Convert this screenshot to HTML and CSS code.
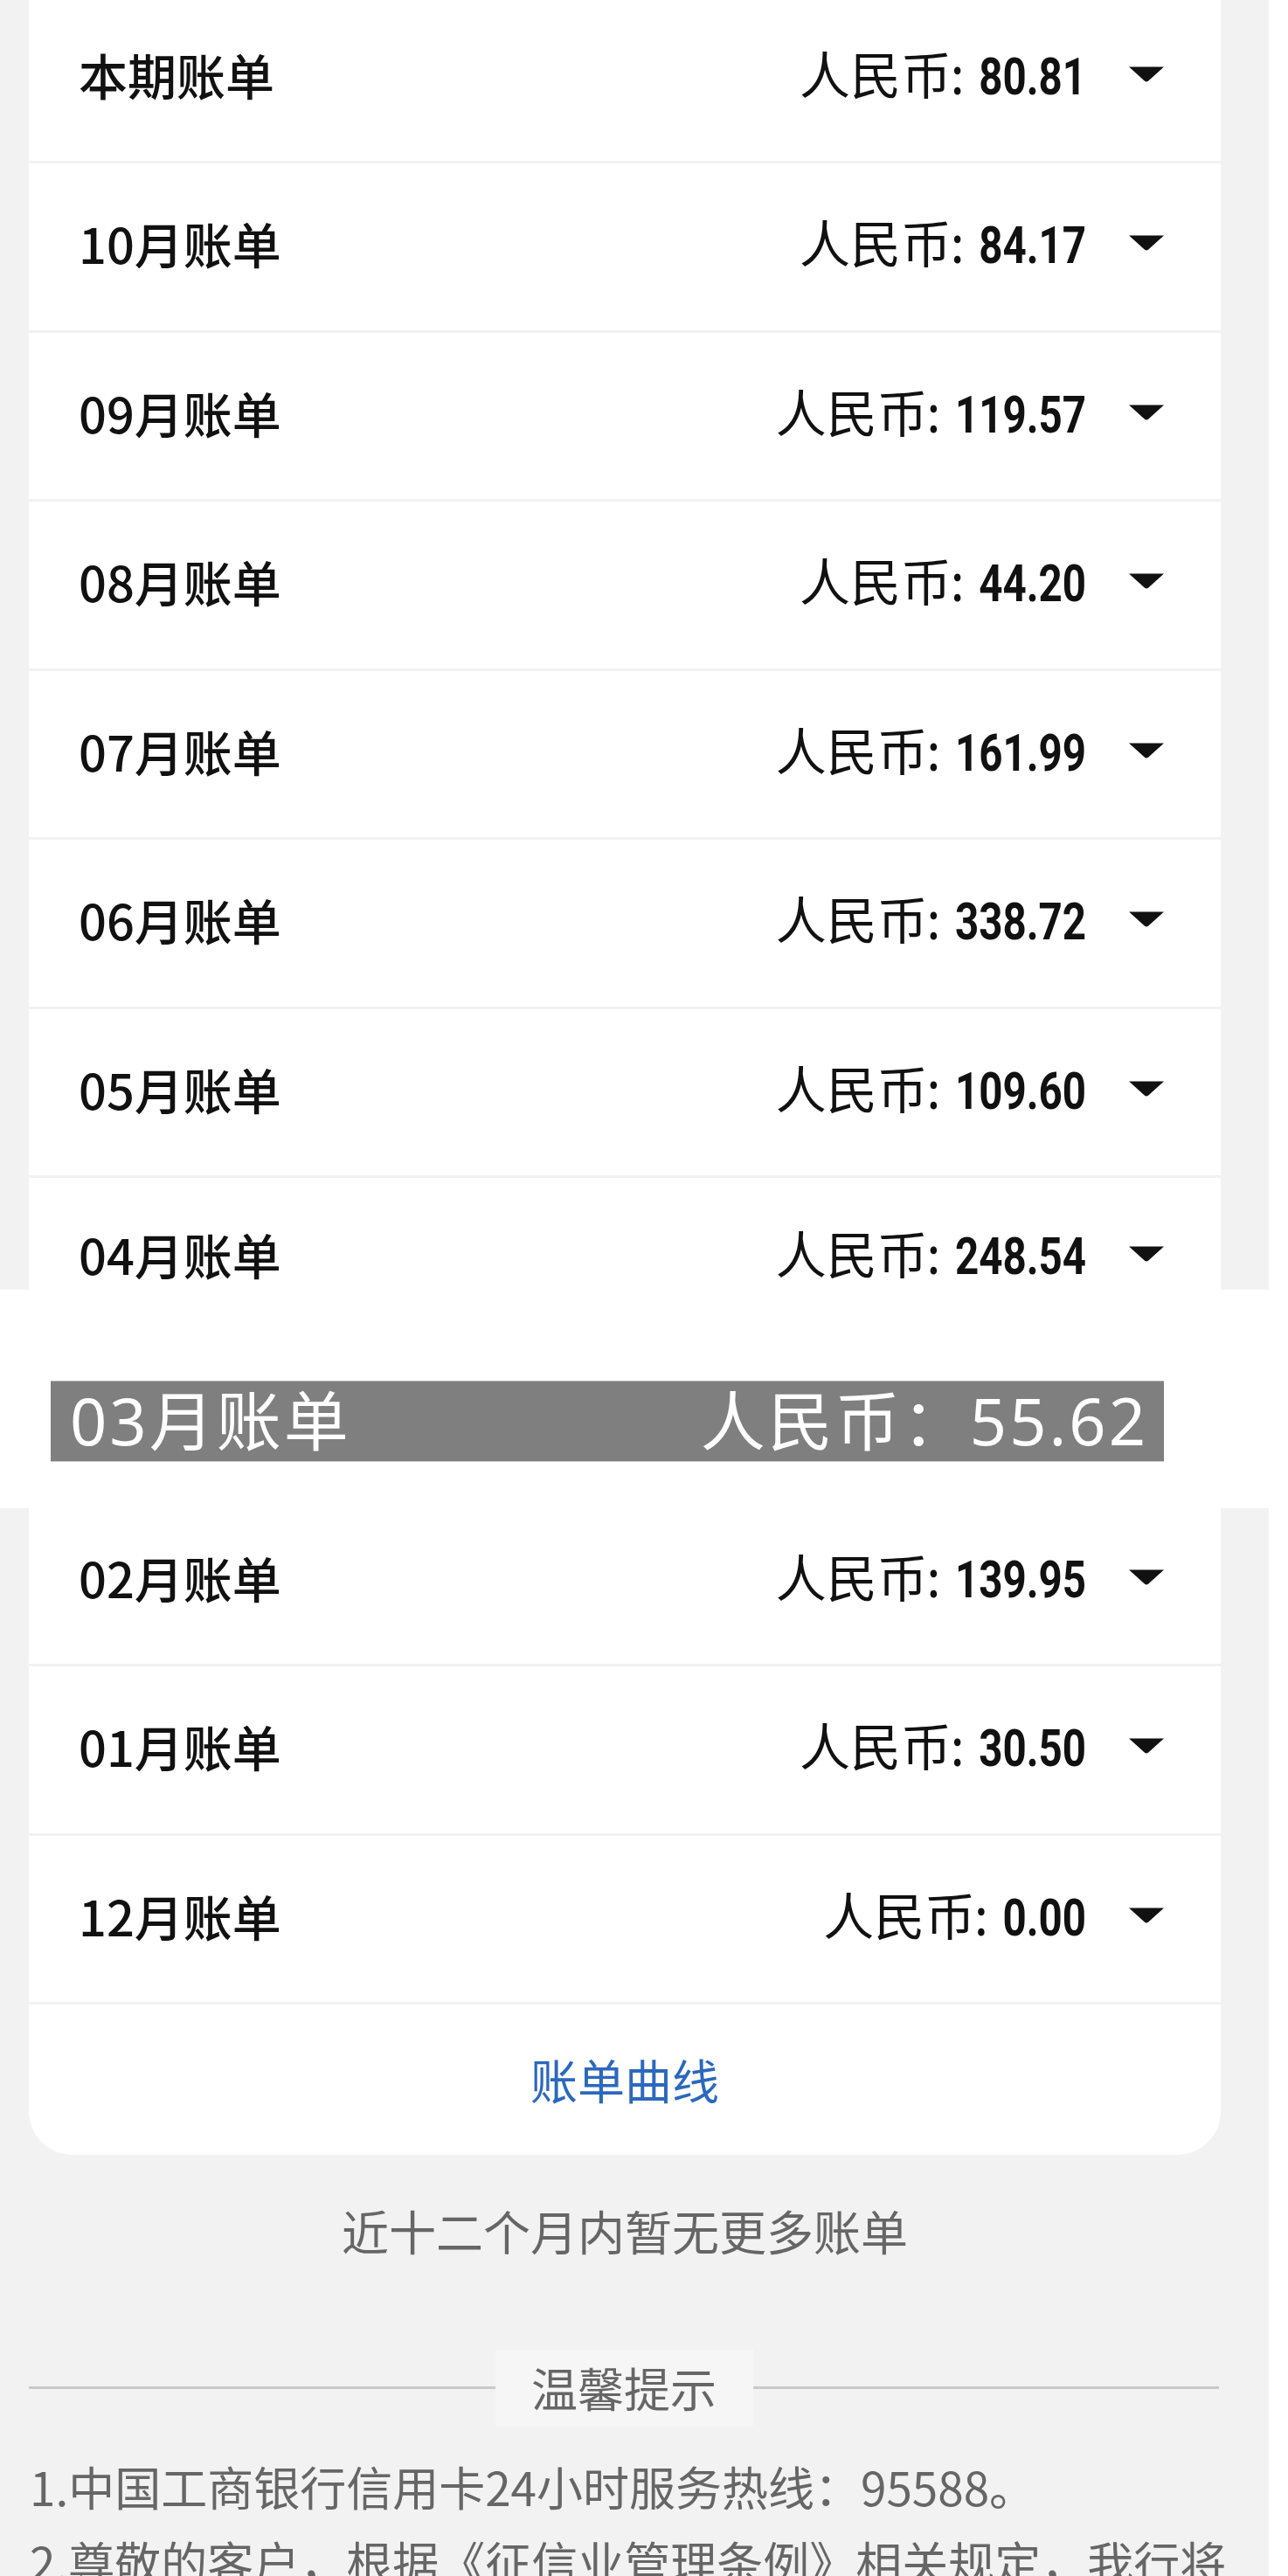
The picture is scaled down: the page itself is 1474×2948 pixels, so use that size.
FILE: index.html
```html
<!DOCTYPE html>
<html lang="zh-CN">
<head>
<meta charset="utf-8">
<title>账单列表</title>
<link rel="stylesheet" href="styles.css">
</head>
<body>
<div class="page">
  <div class="card card-top">
    <div class="row"><span class="label">本期账单</span><span class="amt"><span class="cur">人民币</span><span class="num">: 80.81</span></span><svg class="arrow" viewBox="0 0 42 18"><path d="M1 0.5 H41 L23 16.8 Q21 18.4 19 16.8 Z"/></svg></div>
    <div class="row"><span class="label">10月账单</span><span class="amt"><span class="cur">人民币</span><span class="num">: 84.17</span></span><svg class="arrow" viewBox="0 0 42 18"><path d="M1 0.5 H41 L23 16.8 Q21 18.4 19 16.8 Z"/></svg></div>
    <div class="row"><span class="label">09月账单</span><span class="amt"><span class="cur">人民币</span><span class="num">: 119.57</span></span><svg class="arrow" viewBox="0 0 42 18"><path d="M1 0.5 H41 L23 16.8 Q21 18.4 19 16.8 Z"/></svg></div>
    <div class="row"><span class="label">08月账单</span><span class="amt"><span class="cur">人民币</span><span class="num">: 44.20</span></span><svg class="arrow" viewBox="0 0 42 18"><path d="M1 0.5 H41 L23 16.8 Q21 18.4 19 16.8 Z"/></svg></div>
    <div class="row"><span class="label">07月账单</span><span class="amt"><span class="cur">人民币</span><span class="num">: 161.99</span></span><svg class="arrow" viewBox="0 0 42 18"><path d="M1 0.5 H41 L23 16.8 Q21 18.4 19 16.8 Z"/></svg></div>
    <div class="row"><span class="label">06月账单</span><span class="amt"><span class="cur">人民币</span><span class="num">: 338.72</span></span><svg class="arrow" viewBox="0 0 42 18"><path d="M1 0.5 H41 L23 16.8 Q21 18.4 19 16.8 Z"/></svg></div>
    <div class="row"><span class="label">05月账单</span><span class="amt"><span class="cur">人民币</span><span class="num">: 109.60</span></span><svg class="arrow" viewBox="0 0 42 18"><path d="M1 0.5 H41 L23 16.8 Q21 18.4 19 16.8 Z"/></svg></div>
    <div class="clip clip-top">
      <div class="row row-up"><span class="label">04月账单</span><span class="amt"><span class="cur">人民币</span><span class="num">: 248.54</span></span><svg class="arrow" viewBox="0 0 42 18"><path d="M1 0.5 H41 L23 16.8 Q21 18.4 19 16.8 Z"/></svg></div>
    </div>
  </div>

  <div class="band">
    <div class="mask"><span>03月账单</span><span>人民币：55.62</span></div>
  </div>

  <div class="card card-bottom">
    <div class="clip clip-bottom">
      <div class="row"><span class="label">02月账单</span><span class="amt"><span class="cur">人民币</span><span class="num">: 139.95</span></span><svg class="arrow" viewBox="0 0 42 18"><path d="M1 0.5 H41 L23 16.8 Q21 18.4 19 16.8 Z"/></svg></div>
    </div>
    <div class="row"><span class="label">01月账单</span><span class="amt"><span class="cur">人民币</span><span class="num">: 30.50</span></span><svg class="arrow" viewBox="0 0 42 18"><path d="M1 0.5 H41 L23 16.8 Q21 18.4 19 16.8 Z"/></svg></div>
    <div class="row"><span class="label">12月账单</span><span class="amt"><span class="cur">人民币</span><span class="num">: 0.00</span></span><svg class="arrow" viewBox="0 0 42 18"><path d="M1 0.5 H41 L23 16.8 Q21 18.4 19 16.8 Z"/></svg></div>
    <div class="curve">账单曲线</div>
  </div>

  <div class="nomore">近十二个月内暂无更多账单</div>

  <div class="tips-head"><span class="line"></span><span class="tips-title">温馨提示</span><span class="line"></span></div>
  <div class="tips">
    <p>1.中国工商银行信用卡24小时服务热线：95588。</p>
    <p>2.尊敬的客户，根据《征信业管理条例》相关规定，我行将按照规定向金融信用信息基础数据库报送您的信用信息。</p>
  </div>
</div>
</body>
</html>
```

FILE: styles.css
```css
html, body {
  margin: 0;
  padding: 0;
  background: #ffffff;
}
body {
  font-family: "Noto Sans CJK SC", "Noto Sans", sans-serif;
  overflow: hidden;
}
.page {
  width: 1452px;
  background: #f2f2f2;
  padding-bottom: 40px;
}
.card {
  margin: 0 55px 0 33px;
  background: #ffffff;
}
.card-top {
  margin-top: -6.5px;
}
.card-bottom {
  border-radius: 0 0 50px 50px;
}
.row {
  height: 190.5px;
  border-bottom: 3px solid #f2f2f2;
  display: flex;
  align-items: center;
  padding: 0 64px 8px 57px;
  box-sizing: content-box;
  color: #111111;
  flex-shrink: 0;
  line-height: 1;
}
.row > .label,
.row > .amt,
.row > .arrow {
  margin-top: 0;
}
.row {
  height: 182.5px;
}
.row-up {
  padding-bottom: 16px;
  height: 174.5px;
}
.label {
  font-size: 56px;
  font-weight: 500;
  flex: 1;
}
.amt {
  display: flex;
  align-items: baseline;
}
.cur {
  font-size: 58px;
  font-weight: 400;
}
.num {
  display: inline-block;
  font-family: Roboto, "Liberation Sans", sans-serif;
  font-size: 47.5px;
  font-weight: 700;
  white-space: pre;
  word-spacing: 6px;
  transform: scaleY(1.24);
  transform-origin: 50% 84%;
}
.arrow {
  width: 42px;
  height: 18px;
  margin-left: 48px;
  fill: #111111;
}
.clip {
  overflow: hidden;
  display: flex;
  flex-direction: column;
}
.clip-top {
  height: 127.5px;
  justify-content: flex-start;
}
.clip-bottom {
  height: 181.5px;
  justify-content: flex-end;
}
.band {
  background: #ffffff;
  width: 1474px;
  height: 250px;
  padding: 104px 0 0 58px;
  box-sizing: border-box;
}
.mask {
  width: 1274px;
  height: 93px;
  box-sizing: border-box;
  background: #7f7f7f;
  border-top: 1px solid #b8b8b8;
  border-bottom: 1px solid #c8c8c8;
  color: #ffffff;
  font-family: "Noto Sans", "Noto Sans CJK SC", sans-serif;
  font-size: 74px;
  letter-spacing: 3px;
  display: flex;
  justify-content: space-between;
  align-items: center;
  padding: 0 18px 0 22px;
  line-height: 1;
}
.curve {
  height: 171.5px;
  display: flex;
  align-items: center;
  justify-content: center;
  color: #2c68bd;
  font-size: 54px;
}
.nomore {
  margin: 0 55px 0 33px;
  height: 174px;
  display: flex;
  align-items: center;
  justify-content: center;
  color: #666666;
  font-size: 54px;
}
.tips-head {
  margin: 49px 57px 0 33px;
  height: 87px;
  display: flex;
  align-items: center;
}
.line {
  flex: 1;
  height: 3px;
  background: #c9c9c9;
}
.tips-title {
  width: 295px;
  height: 87px;
  background: #f6f6f6;
  color: #666666;
  font-size: 53px;
  display: flex;
  align-items: center;
  justify-content: center;
}
.tips {
  margin: 26px 40px 0 34px;
  color: #666666;
  font-size: 53px;
  line-height: 86px;
}
.tips p {
  margin: 0;
}
```
